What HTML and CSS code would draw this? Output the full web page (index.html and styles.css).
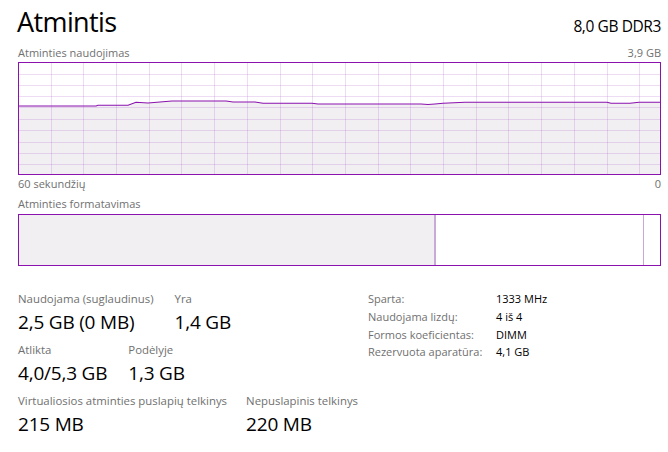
FILE: index.html
```html
<!DOCTYPE html>
<html lang="lt">
<head>
  <meta charset="UTF-8" />
  <title>Atmintis</title>
  <link rel="stylesheet" href="styles.css">
</head>
<body>
  <div class="page">
    <div class="header">
      <h1 class="title">Atmintis</h1>
      <span class="total">8,0 GB DDR3</span>
    </div>

    <div class="caption">
      <span>Atminties naudojimas</span>
      <span>3,9 GB</span>
    </div>
    <svg class="graph" width="643" height="113" viewBox="0 0 643 113">
      <polygon class="area" points="0,44 78,44 80,43.3 110,43.3 118,40.3 130,41 154,39 208,39 215,40 237,40 245,41.3 294,41.3 300,42 403,42 410,42.5 417,42 425,41.3 447,40.3 589,40.3 593,41.3 612,41.3 621,40.3 643,40.3 643,113 0,113" />
      <g class="grid">
        <line x1="0" y1="12.5" x2="643" y2="12.5" />
        <line x1="0" y1="23.5" x2="643" y2="23.5" />
        <line x1="0" y1="34.5" x2="643" y2="34.5" />
        <line x1="0" y1="45.5" x2="643" y2="45.5" />
        <line x1="0" y1="57.5" x2="643" y2="57.5" />
        <line x1="0" y1="68.5" x2="643" y2="68.5" />
        <line x1="0" y1="80.5" x2="643" y2="80.5" />
        <line x1="0" y1="91.5" x2="643" y2="91.5" />
        <line x1="0" y1="102.5" x2="643" y2="102.5" />
        <line x1="33.5" y1="0" x2="33.5" y2="113" />
        <line x1="65.5" y1="0" x2="65.5" y2="113" />
        <line x1="98.5" y1="0" x2="98.5" y2="113" />
        <line x1="131.5" y1="0" x2="131.5" y2="113" />
        <line x1="163.5" y1="0" x2="163.5" y2="113" />
        <line x1="196.5" y1="0" x2="196.5" y2="113" />
        <line x1="229.5" y1="0" x2="229.5" y2="113" />
        <line x1="262.5" y1="0" x2="262.5" y2="113" />
        <line x1="294.5" y1="0" x2="294.5" y2="113" />
        <line x1="327.5" y1="0" x2="327.5" y2="113" />
        <line x1="360.5" y1="0" x2="360.5" y2="113" />
        <line x1="392.5" y1="0" x2="392.5" y2="113" />
        <line x1="425.5" y1="0" x2="425.5" y2="113" />
        <line x1="458.5" y1="0" x2="458.5" y2="113" />
        <line x1="490.5" y1="0" x2="490.5" y2="113" />
        <line x1="523.5" y1="0" x2="523.5" y2="113" />
        <line x1="556.5" y1="0" x2="556.5" y2="113" />
        <line x1="589.5" y1="0" x2="589.5" y2="113" />
        <line x1="621.5" y1="0" x2="621.5" y2="113" />
      </g>
      <polyline class="usage" points="0,44 78,44 80,43.3 110,43.3 118,40.3 130,41 154,39 208,39 215,40 237,40 245,41.3 294,41.3 300,42 403,42 410,42.5 417,42 425,41.3 447,40.3 589,40.3 593,41.3 612,41.3 621,40.3 643,40.3" />
      <rect class="frame" x="0.5" y="0.5" width="642" height="112" />
    </svg>
    <div class="caption under">
      <span>60 sekundžių</span>
      <span>0</span>
    </div>

    <div class="caption">
      <span>Atminties formatavimas</span>
    </div>
    <div class="composition">
      <div class="seg in-use"></div>
      <div class="seg modified"></div>
      <div class="seg standby"></div>
      <div class="seg free"></div>
    </div>

    <div class="details">
      <div class="stats">
        <div class="stat-row">
          <div class="stat">
            <div class="label">Naudojama (suglaudinus)</div>
            <div class="value">2,5 GB (0 MB)</div>
          </div>
          <div class="stat">
            <div class="label">Yra</div>
            <div class="value">1,4 GB</div>
          </div>
        </div>
        <div class="stat-row">
          <div class="stat">
            <div class="label">Atlikta</div>
            <div class="value">4,0/5,3 GB</div>
          </div>
          <div class="stat">
            <div class="label">Podėlyje</div>
            <div class="value">1,3 GB</div>
          </div>
        </div>
        <div class="stat-row last">
          <div class="stat">
            <div class="label">Virtualiosios atminties puslapių telkinys</div>
            <div class="value">215 MB</div>
          </div>
          <div class="stat">
            <div class="label">Nepuslapinis telkinys</div>
            <div class="value">220 MB</div>
          </div>
        </div>
      </div>

      <table class="props">
        <tr><td>Sparta:</td><td>1333 MHz</td></tr>
        <tr><td>Naudojama lizdų:</td><td>4 iš 4</td></tr>
        <tr><td>Formos koeficientas:</td><td>DIMM</td></tr>
        <tr><td>Rezervuota aparatūra:</td><td>4,1 GB</td></tr>
      </table>
    </div>
  </div>
</body>
</html>
```

FILE: styles.css
```css
body {
  margin: 0;
  background: #fff;
  font-family: "Open Sans", "Noto Sans", sans-serif;
  color: #000;
}
.page {
  padding: 0 7px 0 18px;
}
.header {
  display: flex;
  justify-content: space-between;
  align-items: baseline;
  height: 43px;
}
.title {
  margin: 0 0 0 -1px;
  font-weight: 400;
  font-size: 27px;
  line-height: 43px;
  letter-spacing: -0.6px;
}
.total {
  font-size: 15.5px;
  letter-spacing: -0.4px;
}
.caption {
  display: flex;
  justify-content: space-between;
  font-size: 11px;
  line-height: 19px;
  color: #707070;
}
.caption.under {
  line-height: 17px;
  margin-bottom: 2px;
}
.graph {
  display: block;
}
.grid line {
  stroke: #a23fc4;
  stroke-opacity: 0.18;
  stroke-width: 1;
}
.area {
  fill: #f1eff2;
}
.usage {
  fill: none;
  stroke: #8b12ae;
  stroke-width: 1.1;
}
.frame {
  fill: none;
  stroke: #8b12ae;
  stroke-width: 1;
}
.composition {
  display: flex;
  height: 50px;
  border: 1px solid #8b12ae;
  margin-top: 1px;
}
.seg {
  height: 100%;
}
.in-use {
  width: 415px;
  background: #f1eff2;
  border-right: 2px solid #c9a9d7;
}
.modified {
  width: 0;
}
.standby {
  width: 207px;
  border-right: 1px solid #c9a9d7;
}
.free {
  flex: 1;
}
.details {
  display: flex;
  align-items: flex-start;
  margin-top: 25px;
}
.stats {
  width: 350px;
}
.stat-row {
  display: flex;
  gap: 21px;
  margin-bottom: 6.5px;
}
.stat-row.last {
  gap: 19px;
}
.label {
  font-size: 11.4px;
  line-height: 16px;
  color: #707070;
}
.value {
  margin-top: 1.5px;
  font-size: 19px;
  line-height: 27px;
  letter-spacing: -0.2px;
}
.props {
  border-collapse: collapse;
  font-size: 11px;
  margin-top: -1px;
}
.props td {
  padding: 0;
  height: 17.7px;
  line-height: 17px;
}
.props td:first-child {
  color: #707070;
  width: 128px;
}
```
